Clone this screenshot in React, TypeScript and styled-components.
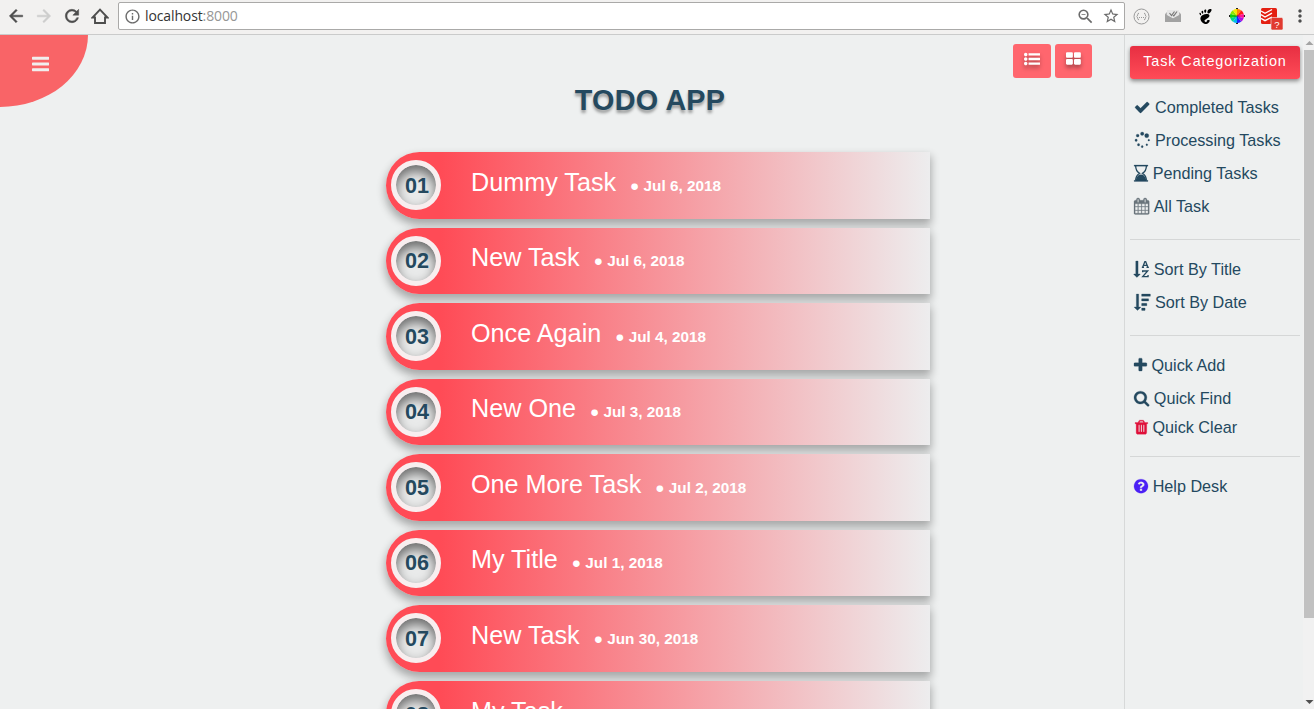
import React from "react";
import styled, { createGlobalStyle, css } from "styled-components";
import { MdArrowBack, MdArrowForward, MdRefresh, MdInfoOutline, MdZoomOut, MdStarBorder, MdMoreVert } from "react-icons/md";
import { SiGnome } from "react-icons/si";

const Global = createGlobalStyle`
  * { box-sizing: border-box; }
  body { margin: 0; background: #eef0f0; font-family: "Liberation Sans", Arial, sans-serif; overflow: hidden; }
`;

const INK = "#24495f";

const Window = styled.div`
  display: flex;
  flex-direction: column;
  width: 1314px;
  height: 709px;
  overflow: hidden;
`;

/* Browser toolbar */
const Toolbar = styled.header`
  flex: none;
  display: flex;
  align-items: flex-start;
  height: 35px;
  padding: 2px 0 0 6px;
  background: #f2f1f0;
  border-bottom: 1px solid #cacbcb;
`;

const NavButton = styled.span<{ $w?: number; $dim?: boolean }>`
  flex: none;
  display: flex;
  align-items: center;
  justify-content: center;
  width: ${(p) => p.$w ?? 28}px;
  height: 28px;
  color: ${(p) => (p.$dim ? "#cdcdcc" : "#4d4d4d")};
  .bold path:last-child { stroke: currentColor; stroke-width: 0.6px; }
`;

const Omnibox = styled.div`
  display: flex;
  align-items: center;
  width: 1007px;
  height: 28px;
  padding: 0 4px 0 5px;
  color: #6b6b6b;
  background: #fff;
  border: 1px solid #aaa9a8;
  border-radius: 2px;
`;

const Address = styled.span`
  flex: 1;
  margin-left: 4px;
  font: 14px/26px "Open Sans", "Noto Sans", sans-serif;
  letter-spacing: -0.12px;
  color: #333;
`;

const Port = styled.span`
  color: #969696;
`;

const BarIcon = styled.span`
  display: flex;
  margin-right: 7px;
`;

const Extension = styled.span<{ $w: number }>`
  flex: none;
  display: flex;
  align-items: center;
  justify-content: center;
  width: ${(p) => p.$w}px;
  height: 28px;
`;

/* Page */
const Page = styled.div`
  flex: 1;
  min-height: 0;
  display: flex;
`;

const Main = styled.main`
  position: relative;
  width: 1124px;
  overflow: hidden;
`;

const MenuCorner = styled.button`
  position: absolute;
  left: 0;
  top: 0;
  width: 88px;
  height: 72px;
  padding: 0 7px 14px 0;
  display: flex;
  align-items: center;
  justify-content: center;
  border: 0;
  border-radius: 0 0 100% 0;
  background: #f96467;
  color: #f1eeee;
`;

const ViewSwitch = styled.div`
  display: flex;
  justify-content: flex-end;
  gap: 4px;
  padding: 9px 32px 0 0;
`;

const ViewButton = styled.button<{ $w: number }>`
  display: flex;
  align-items: flex-start;
  justify-content: center;
  width: ${(p) => p.$w}px;
  height: 34px;
  padding: 7px 0 0;
  border: 0;
  border-radius: 3px;
  background: #ff666e;
  color: #fff;
  svg { filter: drop-shadow(0 3px 2px rgba(0, 0, 0, 0.35)); }
`;

const Title = styled.h1`
  margin: 4px 0 0 176px;
  width: 948px;
  font-size: 28.8px;
  line-height: 36px;
  letter-spacing: 0.2px;
  text-align: center;
  color: ${INK};
  text-shadow: 0 3px 3px rgba(0, 0, 0, 0.35);
`;

const TaskList = styled.ol`
  display: flex;
  flex-direction: column;
  gap: 9px;
  width: 544px;
  margin: 34px 0 0 386px;
  padding: 0;
  list-style: none;
`;

const Task = styled.li`
  flex: none;
  display: flex;
  height: 66.55px;
  padding: 8px 0 0 5px;
  border-radius: 34px 0 0 34px;
  background: linear-gradient(to right, #ff4b56 10%, #ededee 100%);
  box-shadow: 0 5px 8px 1px rgba(0, 0, 0, 0.3);
`;

const Badge = styled.span`
  display: flex;
  align-items: flex-start;
  justify-content: center;
  width: 50px;
  height: 50px;
  border: 5px solid #f8eeef;
  border-radius: 50%;
  padding-left: 2px;
  background: #e9eaea;
  box-shadow: inset 0 6px 12px rgba(0, 0, 0, 0.55);
`;

const TaskNumber = styled.b`
  margin-top: -0.3px;
  color: ${INK};
  font-size: 21.6px;
  line-height: 41px;
`;

const TaskName = styled.span`
  margin: -0.3px 0 0 30px;
  font-size: 25.2px;
  line-height: 44px;
  color: #fff;
  white-space: pre;
`;

const TaskDate = styled.span`
  margin-left: 14px;
  font-size: 15.3px;
  font-weight: bold;
`;

/* Sidebar */
const Sidebar = styled.aside`
  width: 179px;
  padding: 11px 3px 0 5px;
  border-left: 1px solid #d7d9d9;
`;

const SideHeading = styled.div`
  height: 33px;
  margin-bottom: 12px;
  border-radius: 3px;
  background: linear-gradient(#e72f42, #ff4b57);
  box-shadow: 0 2px 4px rgba(0, 0, 0, 0.45);
  color: #fff;
  font-size: 14.4px;
  line-height: 30px;
  letter-spacing: 0.9px;
  text-align: center;
`;

const Group = styled.ul`
  margin: 0 0 13px;
  padding: 0 0 16px;
  list-style: none;
  border-bottom: 1px solid #d5d7d7;
  &:last-child { border: 0; }
`;

const Entry = styled.li<{ $short?: boolean }>`
  display: flex;
  align-items: center;
  height: ${(p) => (p.$short ? 25 : 33)}px;
  padding-left: 4px;
  font-size: 16.2px;
  color: ${INK};
  white-space: nowrap;
`;

const glyph = css`
  display: block;
  flex: none;
  fill: currentColor;
`;

const Glyph = styled.svg<{ $tint?: string; $after?: number; $before?: number }>`
  ${glyph}
  margin: 0 ${(p) => p.$after ?? 4.6}px 0 ${(p) => p.$before ?? 0}px;
  color: ${(p) => p.$tint ?? "inherit"};
  ${Entry} & { margin-bottom: 1px; stroke: currentColor; stroke-width: 28px; overflow: visible; }
`;

/* Scrollbar */
const Scrollbar = styled.div`
  display: flex;
  flex-direction: column;
  align-items: flex-end;
  width: 11px;
  background: #f1f1f1;
`;

const Thumb = styled.div`
  width: 10px;
  height: 568px;
  background: #c1c1c1;
`;

const Arrow = styled.svg`
  display: block;
  flex: none;
`;

const Spring = styled.div`
  flex: 1;
`;

type Shape = { x: number; w: number; d: string; line?: string };

const shapes: Record<string, Shape> = {
  bars: { x: 128, w: 1536, d: "M1664 1344v128q0 26-19 45t-45 19h-1408q-26 0-45-19t-19-45v-128q0-26 19-45t45-19h1408q26 0 45 19t19 45zm0-512v128q0 26-19 45t-45 19h-1408q-26 0-45-19t-19-45v-128q0-26 19-45t45-19h1408q26 0 45 19t19 45zm0-512v128q0 26-19 45t-45 19h-1408q-26 0-45-19t-19-45v-128q0-26 19-45t45-19h1408q26 0 45 19t19 45z" },
  list: { x: 0, w: 1792, d: "M384 1408q0 80-56 136t-136 56-136-56-56-136 56-136 136-56 136 56 56 136zm0-512q0 80-56 136t-136 56-136-56-56-136 56-136 136-56 136 56 56 136zm1408 416v192q0 13-9.5 22.5t-22.5 9.5h-1216q-13 0-22.5-9.5t-9.5-22.5v-192q0-13 9.5-22.5t22.5-9.5h1216q13 0 22.5 9.5t9.5 22.5zm-1408-928q0 80-56 136t-136 56-136-56-56-136 56-136 136-56 136 56 56 136zm1408 416v192q0 13-9.5 22.5t-22.5 9.5h-1216q-13 0-22.5-9.5t-9.5-22.5v-192q0-13 9.5-22.5t22.5-9.5h1216q13 0 22.5 9.5t9.5 22.5zm0-512v192q0 13-9.5 22.5t-22.5 9.5h-1216q-13 0-22.5-9.5t-9.5-22.5v-192q0-13 9.5-22.5t22.5-9.5h1216q13 0 22.5 9.5t9.5 22.5z" },
  grid: { x: 64, w: 1664, d: "M832 1024v384q0 52-38 90t-90 38h-512q-52 0-90-38t-38-90v-384q0-52 38-90t90-38h512q52 0 90 38t38 90zm0-768v384q0 52-38 90t-90 38h-512q-52 0-90-38t-38-90v-384q0-52 38-90t90-38h512q52 0 90 38t38 90zm896 768v384q0 52-38 90t-90 38h-512q-52 0-90-38t-38-90v-384q0-52 38-90t90-38h512q52 0 90 38t38 90zm0-768v384q0 52-38 90t-90 38h-512q-52 0-90-38t-38-90v-384q0-52 38-90t90-38h512q52 0 90 38t38 90z" },
  check: { x: 0, w: 1792, d: "M1671 566q0 40-28 68l-724 724-136 136q-28 28-68 28t-68-28l-136-136-362-362q-28-28-28-68t28-68l136-136q28-28 68-28t68 28l294 295 656-657q28-28 68-28t68 28l136 136q28 28 28 68z" },
  spinner: { x: 0, w: 1792, d: "M370 1394a128 128 0 1 0 256 0a128 128 0 1 0-256 0zM784 1600a112 112 0 1 0 224 0a112 112 0 1 0-224 0zM100 896a130 130 0 1 0 260 0a130 130 0 1 0-260 0zM1302 1394a100 100 0 1 0 200 0a100 100 0 1 0-200 0zM240 398a160 160 0 1 0 320 0a160 160 0 1 0-320 0zM1520 896a96 96 0 1 0 192 0a96 96 0 1 0-192 0zM704 192a192 192 0 1 0 384 0a192 192 0 1 0-384 0zM1160 398a230 230 0 1 0 460 0a230 230 0 1 0-460 0z" },
  hourglass: { x: 128, w: 1536, d: "M140 0H1652V128H140zM140 1664H1652V1792H140zM340 1664C350 1430 500 1200 720 1060H1072C1292 1200 1442 1430 1452 1664z", line: "M310 100C310 480 480 740 740 896C480 1052 310 1310 310 1700M1482 100C1482 480 1312 740 1052 896C1312 1052 1482 1310 1482 1700" },
  calendar: { x: 64, w: 1664, d: "M192 1664h288v-288h-288v288zm352 0h320v-288h-320v288zm-352-352h288v-320h-288v320zm352 0h320v-320h-320v320zm-352-384h288v-288h-288v288zm736 736h320v-288h-320v288zm-384-736h320v-288h-320v288zm768 736h288v-288h-288v288zm-384-352h320v-320h-320v320zm-352-864v-288q0-13-9.500-22.500t-22.500-9.500h-64q-13 0-22.500 9.500t-9.500 22.500v288q0 13 9.500 22.500t22.500 9.500h64q13 0 22.500-9.500t9.500-22.500zm736 864h288v-320h-288v320zm-384-384h320v-288h-320v288zm384 0h288v-288h-288v288zm32-480v-288q0-13-9.500-22.500t-22.500-9.500h-64q-13 0-22.500 9.500t-9.500 22.500v288q0 13 9.500 22.500t22.500 9.500h64q13 0 22.500-9.500t9.500-22.500zm384-64v1280q0 52-38 90t-90 38h-1408q-52 0-90-38t-38-90v-1280q0-52 38-90t90-38h128v-96q0-66 47-113t113-47h64q66 0 113 47t47 113v96h384v-96q0-66 47-113t113-47h64q66 0 113 47t47 113v96h128q52 0 90 38t38 90z" },
  sortTitle: { x: 64, w: 1664, d: "M736 1440q0 12-10 24l-319 319q-10 9-23 9-12 0-23-9l-320-320q-15-16-7-35 8-20 30-20h192v-1376q0-14 9-23t23-9h192q14 0 23 9t9 23v1376h192q14 0 23 9t9 23z", line: "M1010 690L1250 60h90L1580 690M1110 480h370M920 700h240M1430 700h260M1010 1230V1090H1560L1020 1700H1600V1540" },
  sortDate: { x: 0, w: 1792, d: "M736 1440q0 12-10 24l-319 319q-10 9-23 9-12 0-23-9l-320-320q-15-16-7-35 8-20 30-20h192v-1376q0-14 9-23t23-9h192q14 0 23 9t9 23v1376h192q14 0 23 9t9 23zM864 0h896q32 0 32 32v192q0 32-32 32h-896q-32 0-32-32v-192q0-32 32-32zM864 512h704q32 0 32 32v192q0 32-32 32h-704q-32 0-32-32v-192q0-32 32-32zM864 1024h512q32 0 32 32v192q0 32-32 32h-512q-32 0-32-32v-192q0-32 32-32zM864 1536h320q32 0 32 32v192q0 32-32 32h-320q-32 0-32-32v-192q0-32 32-32z" },
  plus: { x: 192, w: 1408, d: "M1600 736v192q0 40-28 68t-68 28h-416v416q0 40-28 68t-68 28h-192q-40 0-68-28t-28-68v-416h-416q-40 0-68-28t-28-68v-192q0-40 28-68t68-28h416v-416q0-40 28-68t68-28h192q40 0 68 28t28 68v416h416q40 0 68 28t28 68z" },
  search: { x: 64, w: 1664, d: "M1216 832q0-185-131.500-316.500t-316.500-131.500-316.500 131.500-131.500 316.500 131.500 316.500 316.500 131.500 316.500-131.500 131.500-316.500zm512 832q0 52-38 90t-90 38q-54 0-90-38l-343-342q-179 124-399 124-143 0-273.500-55.500t-225-150-150-225-55.500-273.500 55.500-273.500 150-225 225-150 273.500-55.500 273.500 55.500 225 150 150 225 55.500 273.500q0 220-124 399l343 343q37 37 37 90z" },
  trash: { x: 192, w: 1408, d: "M704 1376v-704q0-14-9-23t-23-9h-64q-14 0-23 9t-9 23v704q0 14 9 23t23 9h64q14 0 23-9t9-23zm256 0v-704q0-14-9-23t-23-9h-64q-14 0-23 9t-9 23v704q0 14 9 23t23 9h64q14 0 23-9t9-23zm256 0v-704q0-14-9-23t-23-9h-64q-14 0-23 9t-9 23v704q0 14 9 23t23 9h64q14 0 23-9t9-23zm-544-992h448l-48-117q-7-9-17-11h-317q-10 2-17 11zm928 32v64q0 14-9 23t-23 9h-96v948q0 83-47 143.500t-113 60.500h-832q-66 0-113-58.500t-47-141.500v-952h-96q-14 0-23-9t-9-23v-64q0-14 9-23t23-9h309l70-167q15-37 54-63t79-26h320q40 0 79 26t54 63l70 167h309q14 0 23 9t9 23z" },
  help: { x: 128, w: 1536, d: "M1024 1376v-192q0-14-9-23t-23-9h-192q-14 0-23 9t-9 23v192q0 14 9 23t23 9h192q14 0 23-9t9-23zm256-672q0-88-55.500-163t-138.500-116-170-41q-243 0-371 213-15 24 8 42l132 100q7 6 19 6 16 0 25-12 53-68 86-92 34-24 86-24 48 0 85.500 26t37.500 59q0 38-20 61t-68 45q-63 28-115.500 86.500t-52.500 125.500v36q0 14 9 23t23 9h192q14 0 23-9t9-23q0-19 21.500-49.500t54.500-49.500q32-18 49-28.500t46-35 44.500-48 28-60.500 12.500-81zm384 192q0 209-103 385.500t-279.500 279.500-385.500 103-385.500-103-279.500-279.500-103-385.500 103-385.500 279.500-279.500 385.500-103 385.500 103 279.500 279.500 103 385.500z" },
};

function Icon({ name, size = 16, tint, before, after }: { name: string; size?: number; tint?: string; before?: number; after?: number }) {
  const s = shapes[name];
  return (
    <Glyph width={(s.w / 1792) * size} height={size} viewBox={`${s.x} 0 ${s.w} 1792`} $tint={tint} $before={before} $after={after}>
      <path d={s.d} />
      {s.line && <path d={s.line} fill="none" stroke="currentColor" strokeWidth="145" />}
    </Glyph>
  );
}

const tasks = [
  ["01", "Dummy Task", "Jul 6, 2018"],
  ["02", "New Task", "Jul 6, 2018"],
  ["03", "Once Again", "Jul 4, 2018"],
  ["04", "New One", "Jul 3, 2018"],
  ["05", "One More Task", "Jul 2, 2018"],
  ["06", "My Title", "Jul 1, 2018"],
  ["07", "New Task", "Jun 30, 2018"],
  ["08", "My Task", ""],
];

type Item = { icon: string; label: string; tint?: string; before?: number; short?: boolean };

const groups: Item[][] = [
  [
    { icon: "check", label: "Completed Tasks" },
    { icon: "spinner", label: "Processing Tasks" },
    { icon: "hourglass", label: "Pending Tasks" },
    { icon: "calendar", label: "All Task", tint: "#69747b" },
  ],
  [
    { icon: "sortTitle", label: "Sort By Title" },
    { icon: "sortDate", label: "Sort By Date" },
  ],
  [
    { icon: "plus", label: "Quick Add" },
    { icon: "search", label: "Quick Find" },
    { icon: "trash", label: "Quick Clear", tint: "#e0103a", before: 1, short: true },
  ],
  [{ icon: "help", label: "Help Desk", tint: "#4b20f5" }],
];

const wheel = ["#ff8a00", "#ff1a1a", "#ff1493", "#b010e0", "#2020ff", "#00b8f0", "#00d890", "#10d010", "#90e800", "#f4e800"];

function ColorWheel() {
  const pt = (i: number) => {
    const a = (i / wheel.length) * Math.PI * 2 - Math.PI / 2;
    return `${8 + 7 * Math.cos(a)} ${8 + 7 * Math.sin(a)}`;
  };
  return (
    <svg width="16" height="16" viewBox="0 0 16 16">
      <path d="M8 0v16M0 8h16" stroke="#222" strokeWidth="2" />
      {wheel.map((c, i) => (
        <path key={c} fill={c} d={`M8 8L${pt(i)}A7 7 0 0 1 ${pt(i + 1)}z`} />
      ))}
    </svg>
  );
}

export default function App() {
  return (
    <Window>
      <Global />
      <Toolbar>
        <NavButton $w={20}><MdArrowBack className="bold" size={20} /></NavButton>
        <NavButton $w={36} $dim><MdArrowForward className="bold" size={20} /></NavButton>
        <NavButton $w={20}><MdRefresh className="bold" size={20} /></NavButton>
        <NavButton $w={36}>
          <svg width="18" height="18" viewBox="0 0 18 18" fill="none" stroke="currentColor" strokeWidth="1.9">
            <path d="M1.500 10.500H4V16h10v-5.500h2.500L9 2.700z" />
          </svg>
        </NavButton>
        <Omnibox>
          <MdInfoOutline size={17} />
          <Address>localhost<Port>:8000</Port></Address>
          <BarIcon><MdZoomOut size={19} /></BarIcon>
          <MdStarBorder size={18} />
        </Omnibox>
        <Extension $w={32}>
          <svg width="17" height="17" viewBox="0 0 17 17" fill="none" stroke="#999">
            <circle cx="8.500" cy="8.500" r="7.500" />
            <path d="M6 5.200q-1.300 0-1.300 1.400t-1 1.900q1 .5 1 1.900t1.300 1.400M11 5.200q1.300 0 1.300 1.400t1 1.900q-1 .5-1 1.900t-1.300 1.400" />
            <path d="M6 9.500h1M8 9.500h1M10 9.500h1" />
          </svg>
        </Extension>
        <Extension $w={32}>
          <svg width="16" height="14" viewBox="0 0 16 14">
            <path d="M0 5l2-2V1h12v2l2 2v8H0z" fill="#b4b4b4" />
            <path d="M2 1h12v5.500L8 9.500 2 6.500z" fill="#e6e6e6" />
            <path d="M0 5l8 4.500L16 5v8H0z" fill="#a2a2a2" />
            <path d="M4.500 4l2 2.500 3-4M8 6.200l.8.600 3.200-4.300" fill="none" stroke="#777" strokeWidth="1.200" />
          </svg>
        </Extension>
        <Extension $w={32}><SiGnome size={15} color="#000" /></Extension>
        <Extension $w={32}><ColorWheel /></Extension>
        <Extension $w={36}>
          <svg width="24" height="28" viewBox="0 0 24 28">
            <rect x="2" y="6" width="16" height="16" rx="1.500" fill="#e42012" />
            <path d="M2 9l4 2.300L13 7.500M2 12.700L6 15l7-3.800M2 16.400l4 2.300L13 15" fill="none" stroke="#fff" strokeWidth="1.400" />
            <rect x="12" y="15.500" width="12" height="12.500" rx="1.500" fill="#e13a30" stroke="#f2f1f0" strokeWidth="0.600" />
            <text x="18" y="25.500" fill="#fff" fontSize="9.500" textAnchor="middle" fontFamily="Liberation Sans, sans-serif">?</text>
          </svg>
        </Extension>
        <Extension $w={22}><MdMoreVert size={20} color="#4d4d4d" /></Extension>
      </Toolbar>
      <Page>
        <Main>
          <ViewSwitch>
            <ViewButton $w={38}><Icon name="list" after={0} /></ViewButton>
            <ViewButton $w={37}><Icon name="grid" after={0} /></ViewButton>
          </ViewSwitch>
          <Title>TODO APP</Title>
          <TaskList>
            {tasks.map(([n, name, date]) => (
              <Task key={n}>
                <Badge><TaskNumber>{n}</TaskNumber></Badge>
                <TaskName>{name}{date && <TaskDate>● {date}</TaskDate>}</TaskName>
              </Task>
            ))}
          </TaskList>
          <MenuCorner><Icon name="bars" size={20} after={0} /></MenuCorner>
        </Main>
        <Sidebar>
          <SideHeading>Task Categorization</SideHeading>
          {groups.map((items, i) => (
            <Group key={i}>
              {items.map((it) => (
                <Entry key={it.label} $short={it.short}>
                  <Icon name={it.icon} size={16.4} tint={it.tint} before={it.before} />
                  {it.label}
                </Entry>
              ))}
            </Group>
          ))}
        </Sidebar>
        <Scrollbar>
          <Arrow width="10" height="15" viewBox="0 0 10 15"><path d="M1.500 10L5.500 6l4 4z" fill="#a3a3a3" /></Arrow>
          <Thumb />
          <Spring />
          <Arrow width="10" height="15" viewBox="0 0 10 15"><path d="M1.500 6L5.500 10l4-4z" fill="#505050" /></Arrow>
        </Scrollbar>
      </Page>
    </Window>
  );
}
